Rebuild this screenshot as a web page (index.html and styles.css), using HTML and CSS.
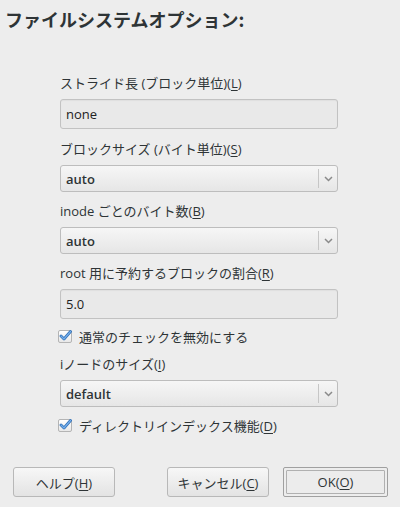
FILE: index.html
```html
<!DOCTYPE html>
<html lang="ja">
<head>
<meta charset="utf-8">
<link rel="stylesheet" href="styles.css">
</head>
<body>
<div class="dialog">
  <h1 class="title">ファイルシステムオプション:</h1>
  <div class="form">
    <label class="lbl">ストライド長 (ブロック単位)(<u>L</u>)</label>
    <div class="entry">none</div>
    <label class="lbl">ブロックサイズ (バイト単位)(<u>S</u>)</label>
    <div class="combo"><span class="val">auto</span><span class="sep"></span><svg class="arrow" width="9" height="6" viewBox="0 0 9 6"><path d="M1 1 L4.5 4.5 L8 1" fill="none" stroke="#8a8a8a" stroke-width="1.5"/></svg></div>
    <label class="lbl">inode ごとのバイト数(<u>B</u>)</label>
    <div class="combo"><span class="val">auto</span><span class="sep"></span><svg class="arrow" width="9" height="6" viewBox="0 0 9 6"><path d="M1 1 L4.5 4.5 L8 1" fill="none" stroke="#8a8a8a" stroke-width="1.5"/></svg></div>
    <label class="lbl">root 用に予約するブロックの割合(<u>R</u>)</label>
    <div class="entry">5.0</div>
    <div class="check"><span class="box"><svg width="13" height="12" viewBox="0 0 13 12"><path d="M2 6 L5 9 L11.5 1.5" fill="none" stroke="#2f6fb8" stroke-width="2.8" stroke-linecap="round" stroke-linejoin="round"/><path d="M2 6 L5 9 L11.5 1.5" fill="none" stroke="#74aeea" stroke-width="1.2" stroke-linecap="round" stroke-linejoin="round"/></svg></span><span>通常のチェックを無効にする</span></div>
    <label class="lbl">iノードのサイズ(<u>I</u>)</label>
    <div class="combo"><span class="val">default</span><span class="sep"></span><svg class="arrow" width="9" height="6" viewBox="0 0 9 6"><path d="M1 1 L4.5 4.5 L8 1" fill="none" stroke="#8a8a8a" stroke-width="1.5"/></svg></div>
    <div class="check check-last"><span class="box"><svg width="13" height="12" viewBox="0 0 13 12"><path d="M2 6 L5 9 L11.5 1.5" fill="none" stroke="#2f6fb8" stroke-width="2.8" stroke-linecap="round" stroke-linejoin="round"/><path d="M2 6 L5 9 L11.5 1.5" fill="none" stroke="#74aeea" stroke-width="1.2" stroke-linecap="round" stroke-linejoin="round"/></svg></span><span>ディレクトリインデックス機能(<u>D</u>)</span></div>
  </div>
  <div class="buttons">
    <button class="btn help">ヘルプ(<u>H</u>)</button>
    <div class="right">
      <button class="btn cancel">キャンセル(<u>C</u>)</button>
      <div class="default"><button class="btn ok">OK(<u>O</u>)</button></div>
    </div>
  </div>
</div>
</body>
</html>
```
FILE: styles.css
```css
* { box-sizing: border-box; }
html, body { margin: 0; padding: 0; }
body {
  width: 400px;
  height: 507px;
  background: #ededed;
  font-family: "Open Sans", "Noto Sans CJK JP", sans-serif;
  color: #2e3436;
  font-size: 13px;
  overflow: hidden;
}
.dialog { display: flex; flex-direction: column; height: 507px; }
.title {
  margin: 0;
  padding: 7px 0 0 5px;
  font-size: 18px;
  line-height: 24px;
  font-weight: bold;
  color: #2e3436;
  font-family: "Noto Sans CJK JP", sans-serif;
}
.form {
  margin: 43px 0 0 60px;
  width: 278px;
  display: flex;
  flex-direction: column;
}
.lbl {
  display: block;
  line-height: 18px;
  height: 18px;
  margin-bottom: 7px;
  white-space: nowrap;
}
u { text-decoration-thickness: 1px; text-underline-offset: 2px; }
.entry {
  height: 30px;
  border: 1px solid #c2c2c2;
  border-radius: 3px;
  background: #e9e9e9;
  box-shadow: inset 0 1px 1px rgba(0,0,0,0.04);
  padding: 0 5px;
  line-height: 28px;
  margin-bottom: 11px;
  color: #222;
}
.combo {
  height: 27px;
  border: 1px solid #bdbdbd;
  border-radius: 3px;
  background: linear-gradient(#f6f6f6, #e6e6e6);
  display: flex;
  align-items: center;
  padding-left: 5px;
  margin-bottom: 10px;
  font-weight: 600;
}
.combo .val { flex: 1; }
.combo .sep {
  width: 1px;
  height: 19px;
  background: #c6c6c6;
  margin-right: 5px;
}
.combo .arrow { margin-right: 4px; }
.check {
  display: flex;
  align-items: center;
  height: 18px;
  margin: -3px 0 10px -2px;
  white-space: nowrap;
}
.check-last { margin-top: -1px; }
.check .box {
  position: relative;
  width: 14px;
  height: 13px;
  border: 1px solid #b4b4b4;
  border-radius: 2px;
  background: linear-gradient(#ffffff, #e8e8e8);
  margin-right: 7px;
}
.check .box svg { position: absolute; left: 0; top: -1px; }
.buttons {
  margin-top: auto;
  margin-bottom: 10px;
  display: flex;
  justify-content: space-between;
  padding: 0 12px 0 13px;
  align-items: center;
}
.right { display: flex; align-items: center; gap: 14px; }
.btn {
  font-family: "Open Sans", "Noto Sans CJK JP", sans-serif;
  font-size: 13px;
  color: #2e3436;
  height: 30px;
  border: 1px solid #b8b8b8;
  border-radius: 3px;
  background: linear-gradient(#f7f7f7, #e3e3e3);
  padding: 0;
}
.help { width: 102px; }
.cancel { width: 102px; }
.default {
  border: 1px solid #a0a0a0;
  border-radius: 2px;
  padding: 2px;
  width: 105px;
  height: 30px;
  display: flex;
}
.ok {
  flex: 1;
  height: 24px;
  background: #ececec;
  border: 1px solid #b0b0b0;
  border-radius: 1px;
}
```
